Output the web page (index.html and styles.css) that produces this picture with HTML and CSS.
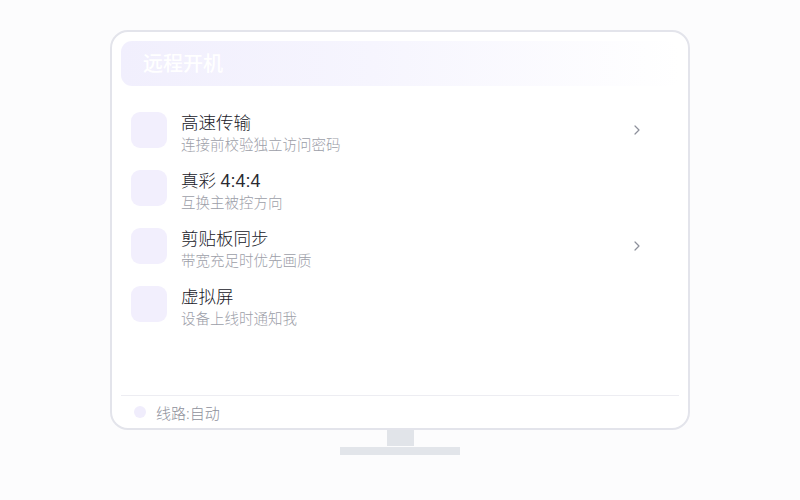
FILE: index.html
```html
<!DOCTYPE html>
<html lang="zh-CN">
<head>
<meta charset="utf-8">
<link rel="stylesheet" href="styles.css">
</head>
<body>
<div class="stage">
  <div class="monitor">
    <div class="header"><span class="header-title">远程开机</span></div>
    <div class="list">
      <div class="row">
        <div class="icon"></div>
        <div class="text">
          <div class="title">高速传输</div>
          <div class="sub">连接前校验独立访问密码</div>
        </div>
        <svg class="chev" width="8" height="10" viewBox="0 0 8 10"><polyline points="2,1 6,5 2,9" fill="none" stroke="#8d909b" stroke-width="1.2" stroke-linecap="round" stroke-linejoin="round"/></svg>
      </div>
      <div class="row">
        <div class="icon"></div>
        <div class="text">
          <div class="title">真彩 <span class="num">4:4:4</span></div>
          <div class="sub">互换主被控方向</div>
        </div>
      </div>
      <div class="row">
        <div class="icon"></div>
        <div class="text">
          <div class="title">剪贴板同步</div>
          <div class="sub">带宽充足时优先画质</div>
        </div>
        <svg class="chev" width="8" height="10" viewBox="0 0 8 10"><polyline points="2,1 6,5 2,9" fill="none" stroke="#8d909b" stroke-width="1.2" stroke-linecap="round" stroke-linejoin="round"/></svg>
      </div>
      <div class="row">
        <div class="icon"></div>
        <div class="text">
          <div class="title">虚拟屏</div>
          <div class="sub">设备上线时通知我</div>
        </div>
      </div>
    </div>
    <div class="footer">
      <span class="dot"></span>
      <span class="footer-text">线路:自动</span>
    </div>
  </div>
  <div class="neck"></div>
  <div class="base"></div>
</div>
</body>
</html>
```
FILE: styles.css
```css
html, body {
  margin: 0;
  padding: 0;
}
body {
  width: 800px;
  height: 500px;
  background: #fcfcfd;
  font-family: "Noto Sans", "Noto Sans CJK SC", sans-serif;
  overflow: hidden;
}
.stage {
  display: flex;
  flex-direction: column;
  align-items: center;
  padding-top: 30px;
}
.monitor {
  box-sizing: border-box;
  width: 580px;
  height: 400px;
  border: 2px solid #e3e4eb;
  border-radius: 18px;
  background: #ffffff;
  padding: 9px 9px 0 9px;
  display: flex;
  flex-direction: column;
}
.header {
  height: 45px;
  border-radius: 11px;
  background: linear-gradient(to right, #f1effd 0%, #f6f5fe 45%, rgba(255,255,255,0) 100%);
  display: flex;
  align-items: center;
  padding-left: 22px;
}
.header-title {
  color: #ffffff;
  font-size: 20px;
  font-weight: 500;
  line-height: 24px;
}
.list {
  margin-top: 25px;
  padding: 0 10px;
  display: flex;
  flex-direction: column;
  flex: 1;
}
.row {
  height: 58px;
  display: flex;
  align-items: flex-start;
}
.icon {
  width: 36px;
  height: 36px;
  margin-top: 1px;
  border-radius: 9px;
  background: #f2effd;
  flex-shrink: 0;
}
.text {
  margin-left: 14px;
  margin-top: -1px;
  display: flex;
  flex-direction: column;
}
.title {
  height: 24px;
  font-size: 17.5px;
  font-weight: 300;
  line-height: 24px;
  color: #202028;
}
.num {
  font-family: "Liberation Sans", "Noto Sans", sans-serif;
  font-weight: 400;
  font-size: 18px;
  line-height: 1;
  color: #2a2a32;
}
.sub {
  font-size: 14.5px;
  font-weight: 300;
  line-height: 21px;
  color: #9c9ea8;
}
.chev {
  margin-left: auto;
  margin-right: 28px;
  margin-top: 14px;
}
.footer {
  height: 32px;
  border-top: 1px solid #ededf2;
  display: flex;
  align-items: center;
  padding-left: 13px;
}
.dot {
  width: 12px;
  height: 12px;
  border-radius: 50%;
  background: #f0edfc;
}
.footer-text {
  margin-left: 10px;
  font-size: 15px;
  font-weight: 300;
  color: #8e909b;
}
.neck {
  width: 27px;
  height: 16px;
  background: #e1e4e9;
}
.base {
  width: 120px;
  height: 8px;
  margin-top: 1px;
  background: #e2e5ea;
}
```
